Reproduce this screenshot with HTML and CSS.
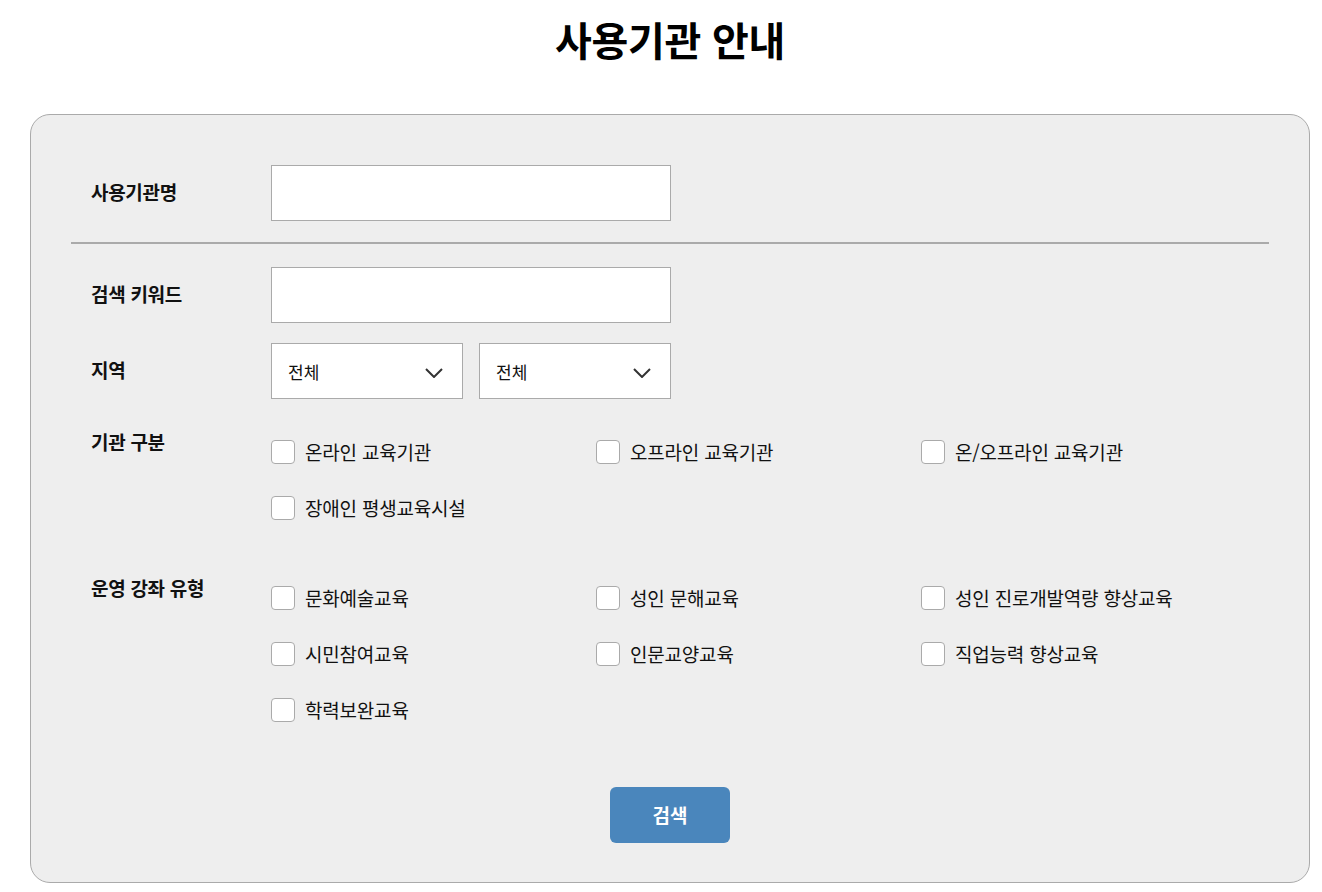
FILE: index.html
```html
<!DOCTYPE html>
<html lang="ko">
<head>
  <meta charset="UTF-8">
  <meta name="viewport" content="width=device-width, initial-scale=1.0">
  <title>사용기관 안내</title>
  <link rel="stylesheet" href="styles.css">
</head>
<body>
  <div class="page">
    <h1 class="title">사용기관 안내</h1>

    <form class="card">
      <div class="field">
        <label class="field-label" for="org-name">사용기관명</label>
        <input type="text" id="org-name" class="text-input">
      </div>

      <hr class="divider">

      <div class="field">
        <label class="field-label" for="keyword">검색 키워드</label>
        <input type="text" id="keyword" class="text-input">
      </div>

      <div class="field field-gap">
        <label class="field-label">지역</label>
        <div class="select-group">
          <div class="select-wrap">
            <select class="select">
              <option>전체</option>
            </select>
            <svg class="chevron" width="18" height="10" viewBox="0 0 18 10"><path d="M1 1l8 8 8-8" fill="none" stroke="#333" stroke-width="2"/></svg>
          </div>
          <div class="select-wrap">
            <select class="select">
              <option>전체</option>
            </select>
            <svg class="chevron" width="18" height="10" viewBox="0 0 18 10"><path d="M1 1l8 8 8-8" fill="none" stroke="#333" stroke-width="2"/></svg>
          </div>
        </div>
      </div>

      <div class="field field-top group-first">
        <div class="field-label">기관 구분</div>
        <div class="check-grid">
          <label class="check"><input type="checkbox"><span>온라인 교육기관</span></label>
          <label class="check"><input type="checkbox"><span>오프라인 교육기관</span></label>
          <label class="check"><input type="checkbox"><span>온/오프라인 교육기관</span></label>
          <label class="check"><input type="checkbox"><span>장애인 평생교육시설</span></label>
        </div>
      </div>

      <div class="field field-top group-next">
        <div class="field-label">운영 강좌 유형</div>
        <div class="check-grid">
          <label class="check"><input type="checkbox"><span>문화예술교육</span></label>
          <label class="check"><input type="checkbox"><span>성인 문해교육</span></label>
          <label class="check"><input type="checkbox"><span>성인 진로개발역량 향상교육</span></label>
          <label class="check"><input type="checkbox"><span>시민참여교육</span></label>
          <label class="check"><input type="checkbox"><span>인문교양교육</span></label>
          <label class="check"><input type="checkbox"><span>직업능력 향상교육</span></label>
          <label class="check"><input type="checkbox"><span>학력보완교육</span></label>
        </div>
      </div>

      <div class="actions">
        <button type="button" class="search-btn">검색</button>
      </div>
    </form>
  </div>
</body>
</html>
```

FILE: styles.css
```css
:root {
  --text-color: #111;
  --card-background: #eeeeee;
  --border-color: #aaaaaa;
  --primary-color: #4a86bc;
}

body {
  margin: 0;
  font-family: "Noto Sans CJK KR", "Noto Sans", sans-serif;
  color: var(--text-color);
  background: #fff;
}

.page {
  width: 1280px;
  margin-left: 30px;
}

.title {
  margin: 16px 0 52px;
  font-size: 40px;
  line-height: 46px;
  font-weight: 700;
  text-align: center;
  letter-spacing: -0.3px;
  color: #000;
}

.card {
  background-color: var(--card-background);
  border: 1px solid var(--border-color);
  border-radius: 20px;
  padding: 50px 40px 39px;
}

.field {
  display: flex;
  align-items: center;
}

.field-top {
  align-items: flex-start;
}

.field-gap {
  margin-top: 20px;
}

.group-first {
  margin-top: 25px;
}

.group-next {
  margin-top: 34px;
}

.field-label {
  width: 180px;
  padding-left: 20px;
  padding-bottom: 3px;
  font-size: 19px;
  font-weight: 700;
  letter-spacing: -0.3px;
}

.field-top .field-label {
  line-height: 36px;
  padding-bottom: 0;
}

.text-input {
  box-sizing: border-box;
  width: 400px;
  height: 56px;
  margin: 0;
  border: 1px solid var(--border-color);
  background: #fff;
  font-size: 17px;
  padding: 0 16px;
  font-family: inherit;
}

.divider {
  border: none;
  height: 2px;
  background-color: var(--border-color);
  margin: 21px 0 23px;
}

.select-group {
  display: flex;
  gap: 16px;
}

.select-wrap {
  position: relative;
}

.select {
  box-sizing: border-box;
  width: 192px;
  height: 56px;
  margin: 0;
  padding: 0 16px;
  border: 1px solid var(--border-color);
  border-radius: 0;
  background: #fff;
  font-family: inherit;
  font-size: 17px;
  color: var(--text-color);
  -webkit-appearance: none;
  appearance: none;
}

.chevron {
  position: absolute;
  right: 20px;
  top: 25px;
  pointer-events: none;
}

.check-grid {
  display: grid;
  grid-template-columns: repeat(3, 325px);
  grid-auto-rows: 56px;
}

.check {
  display: flex;
  align-items: center;
  gap: 10px;
  font-size: 19px;
  letter-spacing: -0.2px;
  cursor: pointer;
}

.check span {
  padding-bottom: 2px;
}

.check input {
  box-sizing: border-box;
  width: 24px;
  height: 24px;
  margin: 0;
  border: 1px solid var(--border-color);
  border-radius: 4px;
  background: #fff;
  -webkit-appearance: none;
  appearance: none;
}

.actions {
  display: flex;
  justify-content: center;
  margin-top: 49px;
}

.search-btn {
  width: 120px;
  height: 56px;
  border: none;
  border-radius: 6px;
  background-color: var(--primary-color);
  color: #fff;
  font-family: inherit;
  font-size: 19px;
  font-weight: 700;
  padding-bottom: 3px;
  cursor: pointer;
}
```
